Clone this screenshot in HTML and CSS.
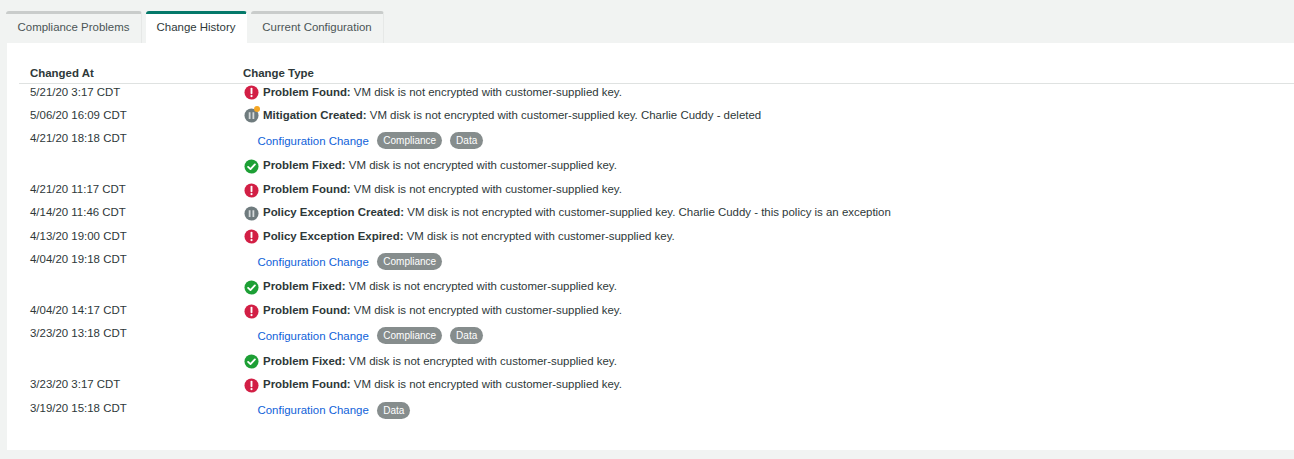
FILE: index.html
```html
<!DOCTYPE html>
<html lang="en">
<head>
<meta charset="utf-8">
<title>Change History</title>
<link rel="stylesheet" href="styles.css">
</head>
<body>
<svg class="defs" width="0" height="0" aria-hidden="true">
  <symbol id="i-alert" viewBox="0 0 16 16"><circle cx="8" cy="8" r="7.5" fill="#d21f45"/><path d="M8 3.8v5" stroke="#fff" stroke-width="2" stroke-linecap="round"/><circle cx="8" cy="11.8" r="1.2" fill="#fff"/></symbol>
  <symbol id="i-check" viewBox="0 0 16 16"><circle cx="8" cy="8" r="7.5" fill="#1d9f35"/><path d="M4.4 8.4l2.5 2.4 4.7-5" fill="none" stroke="#fff" stroke-width="2" stroke-linecap="round" stroke-linejoin="round"/></symbol>
  <symbol id="i-pause" viewBox="0 0 16 16"><circle cx="8" cy="8" r="7.5" fill="#6f7b7e"/><path d="M6 4.4v7.2M10 4.4v7.2" stroke="#d5d9da" stroke-width="1.9"/></symbol>
</svg>
<nav class="tabs">
  <a class="tab tab-a">Compliance Problems</a>
  <a class="tab tab-b active">Change History</a>
  <a class="tab tab-c">Current Configuration</a>
</nav>
<main class="panel">
  <div class="row head"><div>Changed At</div><div>Change Type</div></div>

  <div class="row"><div>5/21/20 3:17 CDT</div><div class="event"><svg class="ico"><use href="#i-alert"/></svg><p><b>Problem Found:</b> VM disk is not encrypted with customer-supplied key.</p></div></div>
  <div class="row"><div>5/06/20 16:09 CDT</div><div class="event"><span class="ico-wrap"><svg class="ico"><use href="#i-pause"/></svg><i class="dot"></i></span><p><b>Mitigation Created:</b> VM disk is not encrypted with customer-supplied key. Charlie Cuddy - deleted</p></div></div>
  <div class="row multi"><div>4/21/20 18:18 CDT</div><div>
    <div class="change"><a href="#">Configuration Change</a><span class="badge">Compliance</span><span class="badge">Data</span></div>
    <div class="event"><svg class="ico"><use href="#i-check"/></svg><p><b>Problem Fixed:</b> VM disk is not encrypted with customer-supplied key.</p></div>
  </div></div>
  <div class="row"><div>4/21/20 11:17 CDT</div><div class="event"><svg class="ico"><use href="#i-alert"/></svg><p><b>Problem Found:</b> VM disk is not encrypted with customer-supplied key.</p></div></div>
  <div class="row"><div>4/14/20 11:46 CDT</div><div class="event"><svg class="ico"><use href="#i-pause"/></svg><p><b>Policy Exception Created:</b> VM disk is not encrypted with customer-supplied key. Charlie Cuddy - this policy is an exception</p></div></div>
  <div class="row"><div>4/13/20 19:00 CDT</div><div class="event"><svg class="ico"><use href="#i-alert"/></svg><p><b>Policy Exception Expired:</b> VM disk is not encrypted with customer-supplied key.</p></div></div>
  <div class="row multi"><div>4/04/20 19:18 CDT</div><div>
    <div class="change"><a href="#">Configuration Change</a><span class="badge">Compliance</span></div>
    <div class="event"><svg class="ico"><use href="#i-check"/></svg><p><b>Problem Fixed:</b> VM disk is not encrypted with customer-supplied key.</p></div>
  </div></div>
  <div class="row"><div>4/04/20 14:17 CDT</div><div class="event"><svg class="ico"><use href="#i-alert"/></svg><p><b>Problem Found:</b> VM disk is not encrypted with customer-supplied key.</p></div></div>
  <div class="row multi"><div>3/23/20 13:18 CDT</div><div>
    <div class="change"><a href="#">Configuration Change</a><span class="badge">Compliance</span><span class="badge">Data</span></div>
    <div class="event"><svg class="ico"><use href="#i-check"/></svg><p><b>Problem Fixed:</b> VM disk is not encrypted with customer-supplied key.</p></div>
  </div></div>
  <div class="row"><div>3/23/20 3:17 CDT</div><div class="event"><svg class="ico"><use href="#i-alert"/></svg><p><b>Problem Found:</b> VM disk is not encrypted with customer-supplied key.</p></div></div>
  <div class="row multi"><div>3/19/20 15:18 CDT</div><div>
    <div class="change"><a href="#">Configuration Change</a><span class="badge">Data</span></div>
  </div></div>
</main>
</body>
</html>
```
FILE: styles.css
```css
* { box-sizing: border-box; }
html, body { margin: 0; height: 100%; }
body {
  background: #f1f3f2;
  color: #2e3839;
  font: 11.45px/16px "Liberation Sans", Arial, sans-serif;
  overflow: hidden;
  padding-top: 11px;
}
.defs { position: absolute; }
.tabs { display: flex; gap: 4px; padding-left: 6px; height: 32px; }
.tab {
  border-top: 3px solid #c9cccb;
  border-right: 1px solid #e6e8e7;
  border-radius: 3px 3px 0 0;
  color: #4b5556;
  padding-top: 5px;
  text-align: center;
}
.tab-a { width: 136px; }
.tab-b { width: 101px; }
.tab-c { width: 133px; }
.tab.active { background: #fff; border-top-color: #04796a; border-right-color: #fff; color: #2e3839; }
.panel {
  background: #fff;
  height: 407px;
  margin-left: 7px;
  padding: 22px 0 0 12px;
}
.row {
  display: grid;
  grid-template-columns: 213px 1fr;
  padding-left: 11px;
  height: 23.3px;
}
.row.multi { height: 51px; }
.row.head {
  border-bottom: 1px solid #dfe2e1;
  font-weight: 700;
  height: 18.55px;
  line-height: 17px;
}
.event { display: flex; align-items: center; height: 16px; padding-left: 1px; }
.event p { margin: 0; }
.ico { width: 15px; height: 15px; flex: none; margin-right: 4px; margin-top: 2px; }
.ico-wrap { position: relative; display: flex; flex: none; }
.dot {
  position: absolute;
  top: 0;
  left: 10px;
  width: 6px;
  height: 6px;
  border-radius: 50%;
  background: #f5a623;
}
.change { display: flex; align-items: center; height: 17px; margin-top: 2px; padding-left: 14.5px; margin-bottom: 8.3px; }
.change a { color: #0f62d9; text-decoration: none; margin-right: 8.5px; }
.badge {
  background: #868d8d;
  border-radius: 9px;
  color: #fff;
  font-size: 10px;
  height: 17px;
  line-height: 17px;
  margin-right: 8px;
  padding: 0 6px;
}
```
